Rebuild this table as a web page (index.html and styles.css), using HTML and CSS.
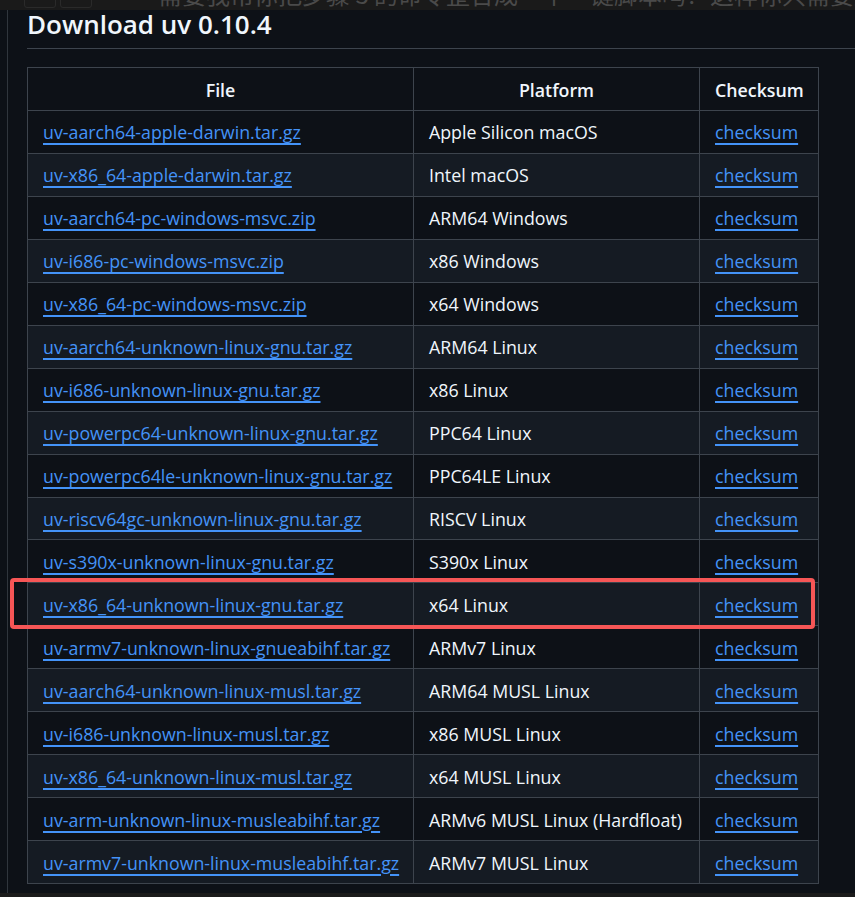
FILE: index.html
```html
<!DOCTYPE html>
<html lang="en">
<head>
<meta charset="utf-8">
<title>Download uv 0.10.4</title>
<link rel="stylesheet" href="styles.css">
</head>
<body>
<div class="topbar">
  <span class="tb-btns"><span class="tb-btn"></span><span class="tb-btn"></span></span>
  <span class="tb-text">需要我帮你把步骤 3 的命令整合成一个一键脚本吗？这样你只需要复制粘贴</span>
</div>
<div class="page">
  <div class="content">
    <h2 class="title">Download uv 0.10.4</h2>
    <div class="table-wrap">
      <table class="dl">
        <colgroup><col class="c1"><col class="c2"><col class="c3"></colgroup>
        <thead>
          <tr><th>File</th><th>Platform</th><th>Checksum</th></tr>
        </thead>
        <tbody>
          <tr><td><a href="#">uv-aarch64-apple-darwin.tar.gz</a></td><td>Apple Silicon macOS</td><td><a href="#">checksum</a></td></tr>
          <tr><td><a href="#">uv-x86_64-apple-darwin.tar.gz</a></td><td>Intel macOS</td><td><a href="#">checksum</a></td></tr>
          <tr><td><a href="#">uv-aarch64-pc-windows-msvc.zip</a></td><td>ARM64 Windows</td><td><a href="#">checksum</a></td></tr>
          <tr><td><a href="#">uv-i686-pc-windows-msvc.zip</a></td><td>x86 Windows</td><td><a href="#">checksum</a></td></tr>
          <tr><td><a href="#">uv-x86_64-pc-windows-msvc.zip</a></td><td>x64 Windows</td><td><a href="#">checksum</a></td></tr>
          <tr><td><a href="#">uv-aarch64-unknown-linux-gnu.tar.gz</a></td><td>ARM64 Linux</td><td><a href="#">checksum</a></td></tr>
          <tr><td><a href="#">uv-i686-unknown-linux-gnu.tar.gz</a></td><td>x86 Linux</td><td><a href="#">checksum</a></td></tr>
          <tr><td><a href="#">uv-powerpc64-unknown-linux-gnu.tar.gz</a></td><td>PPC64 Linux</td><td><a href="#">checksum</a></td></tr>
          <tr><td><a href="#">uv-powerpc64le-unknown-linux-gnu.tar.gz</a></td><td>PPC64LE Linux</td><td><a href="#">checksum</a></td></tr>
          <tr><td><a href="#">uv-riscv64gc-unknown-linux-gnu.tar.gz</a></td><td>RISCV Linux</td><td><a href="#">checksum</a></td></tr>
          <tr><td><a href="#">uv-s390x-unknown-linux-gnu.tar.gz</a></td><td>S390x Linux</td><td><a href="#">checksum</a></td></tr>
          <tr><td><a href="#">uv-x86_64-unknown-linux-gnu.tar.gz</a></td><td>x64 Linux</td><td><a href="#">checksum</a></td></tr>
          <tr><td><a href="#">uv-armv7-unknown-linux-gnueabihf.tar.gz</a></td><td>ARMv7 Linux</td><td><a href="#">checksum</a></td></tr>
          <tr><td><a href="#">uv-aarch64-unknown-linux-musl.tar.gz</a></td><td>ARM64 MUSL Linux</td><td><a href="#">checksum</a></td></tr>
          <tr><td><a href="#">uv-i686-unknown-linux-musl.tar.gz</a></td><td>x86 MUSL Linux</td><td><a href="#">checksum</a></td></tr>
          <tr><td><a href="#">uv-x86_64-unknown-linux-musl.tar.gz</a></td><td>x64 MUSL Linux</td><td><a href="#">checksum</a></td></tr>
          <tr><td><a href="#">uv-arm-unknown-linux-musleabihf.tar.gz</a></td><td>ARMv6 MUSL Linux (Hardfloat)</td><td><a href="#">checksum</a></td></tr>
          <tr><td><a href="#">uv-armv7-unknown-linux-musleabihf.tar.gz</a></td><td>ARMv7 MUSL Linux</td><td><a href="#">checksum</a></td></tr>
        </tbody>
      </table>
      <div class="highlight"></div>
    </div>
  </div>
</div>
<div class="bottombar"></div>
</body>
</html>
```

FILE: styles.css
```css
html, body {
  margin: 0;
  padding: 0;
  height: 100%;
  overflow: hidden;
}
body {
  background: #0d1117;
  color: #f0f6fc;
  font-family: "Open Sans", "Noto Sans", "Noto Sans CJK SC", sans-serif;
  font-size: 17.8px;
  line-height: 28px;
  position: relative;
}
.topbar {
  position: absolute;
  top: 0;
  left: 0;
  right: 0;
  height: 10px;
  background: #1a1a1a;
  overflow: hidden;
  z-index: 5;
}
.tb-btns {
  position: absolute;
  left: 24px;
  top: -14px;
  display: flex;
  gap: 4px;
}
.tb-btn {
  width: 30px;
  height: 20px;
  border: 1px solid #2a2a2a;
  border-radius: 3px;
}
.tb-text {
  position: absolute;
  left: 158px;
  top: -20px;
  font-family: "Noto Sans CJK SC", sans-serif;
  font-size: 24px;
  line-height: 28px;
  color: #4a4a4a;
  white-space: nowrap;
}
.page {
  margin-left: 7px;
  border-left: 1px solid #30363d;
  height: 893px;
  padding: 7px 0 0 19px;
  box-sizing: border-box;
}
.title {
  margin: 0 0 18px 0;
  font-size: 26px;
  line-height: 34px;
  font-weight: 600;
  padding-bottom: 7px;
  border-bottom: 1px solid #3d444d;
  color: #f0f6fc;
}
.table-wrap {
  position: relative;
  width: 791px;
}
.dl {
  border-collapse: collapse;
  table-layout: fixed;
  width: 791px;
}
.dl .c1 { width: 386px; }
.dl .c2 { width: 286px; }
.dl .c3 { width: 119px; }
.dl th, .dl td {
  border: 1px solid #3d444d;
  padding: 8.5px 15px 5.5px;
  height: 27.95px;
  line-height: 27.95px;
  white-space: nowrap;
}
.dl th {
  font-weight: 600;
  text-align: center;
}
.dl td { text-align: left; }
.dl tbody tr:nth-child(2n) {
  background: #151b23;
}
.dl a {
  color: #4493f8;
  text-decoration: underline;
  text-decoration-thickness: 2px;
  text-underline-offset: 4px;
}
.highlight {
  position: absolute;
  left: -17px;
  top: 511px;
  width: 805px;
  height: 51px;
  box-sizing: border-box;
  border: 4px solid #f65656;
  border-radius: 4px;
  pointer-events: none;
}
.bottombar {
  position: absolute;
  left: 0;
  right: 0;
  bottom: 0;
  height: 4px;
  background: #1b1b1b;
}
```
